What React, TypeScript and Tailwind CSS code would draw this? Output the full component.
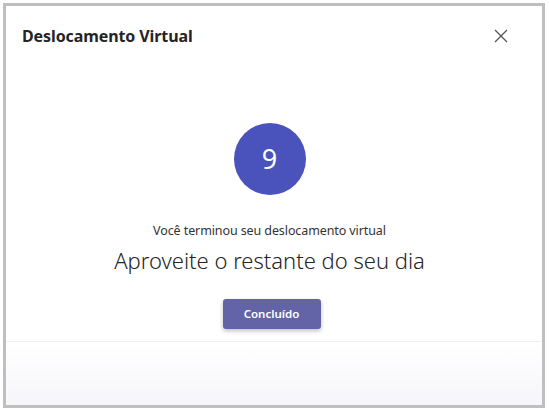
import React from 'react';

const App = () => {
  return (
    <div className="w-[549px] h-[411px] bg-white p-[3px] font-['Noto_Sans',sans-serif]">
      <div className="w-[542px] h-[405px] border-[3px] border-[#bfbfbf] bg-white flex flex-col">
        <div className="flex items-center justify-between pl-[16px] pr-[33px] pt-[18px]">
          <h1 className="text-[16px] font-bold text-[#242424] tracking-[-0.1px]">Deslocamento Virtual</h1>
          <button className="text-[#555]">
            <svg width="16" height="16" viewBox="0 0 16 16" fill="none" stroke="currentColor" strokeWidth="1.3">
              <path d="M2 2L14 14M14 2L2 14" />
            </svg>
          </button>
        </div>

        <div className="flex flex-col items-center pt-[75px] pr-[9px]">
          <div className="w-[72px] h-[72px] rounded-full bg-[#4a52bb] flex items-center justify-center text-white text-[27px]">
            9
          </div>
          <p className="mt-[27px] text-[12.5px] leading-[17px] text-[#333] tracking-[-0.1px]">Você terminou seu deslocamento virtual</p>
          <p className="mt-[6px] text-[22px] font-light text-[#242424] leading-[30px]">Aproveite o restante do seu dia</p>
          <button className="mt-[24px] ml-[4px] w-[98px] h-[30px] rounded-[3px] bg-[#6264a7] text-white text-[11.5px] font-semibold shadow-[0_2px_4px_rgba(0,0,0,0.25)]">
            Concluído
          </button>
        </div>

        <div className="mt-auto h-[64px] border-t border-[#f0f0f4] bg-gradient-to-b from-white to-[#f6f6fa]" />
      </div>
    </div>
  );
};

export default App;
